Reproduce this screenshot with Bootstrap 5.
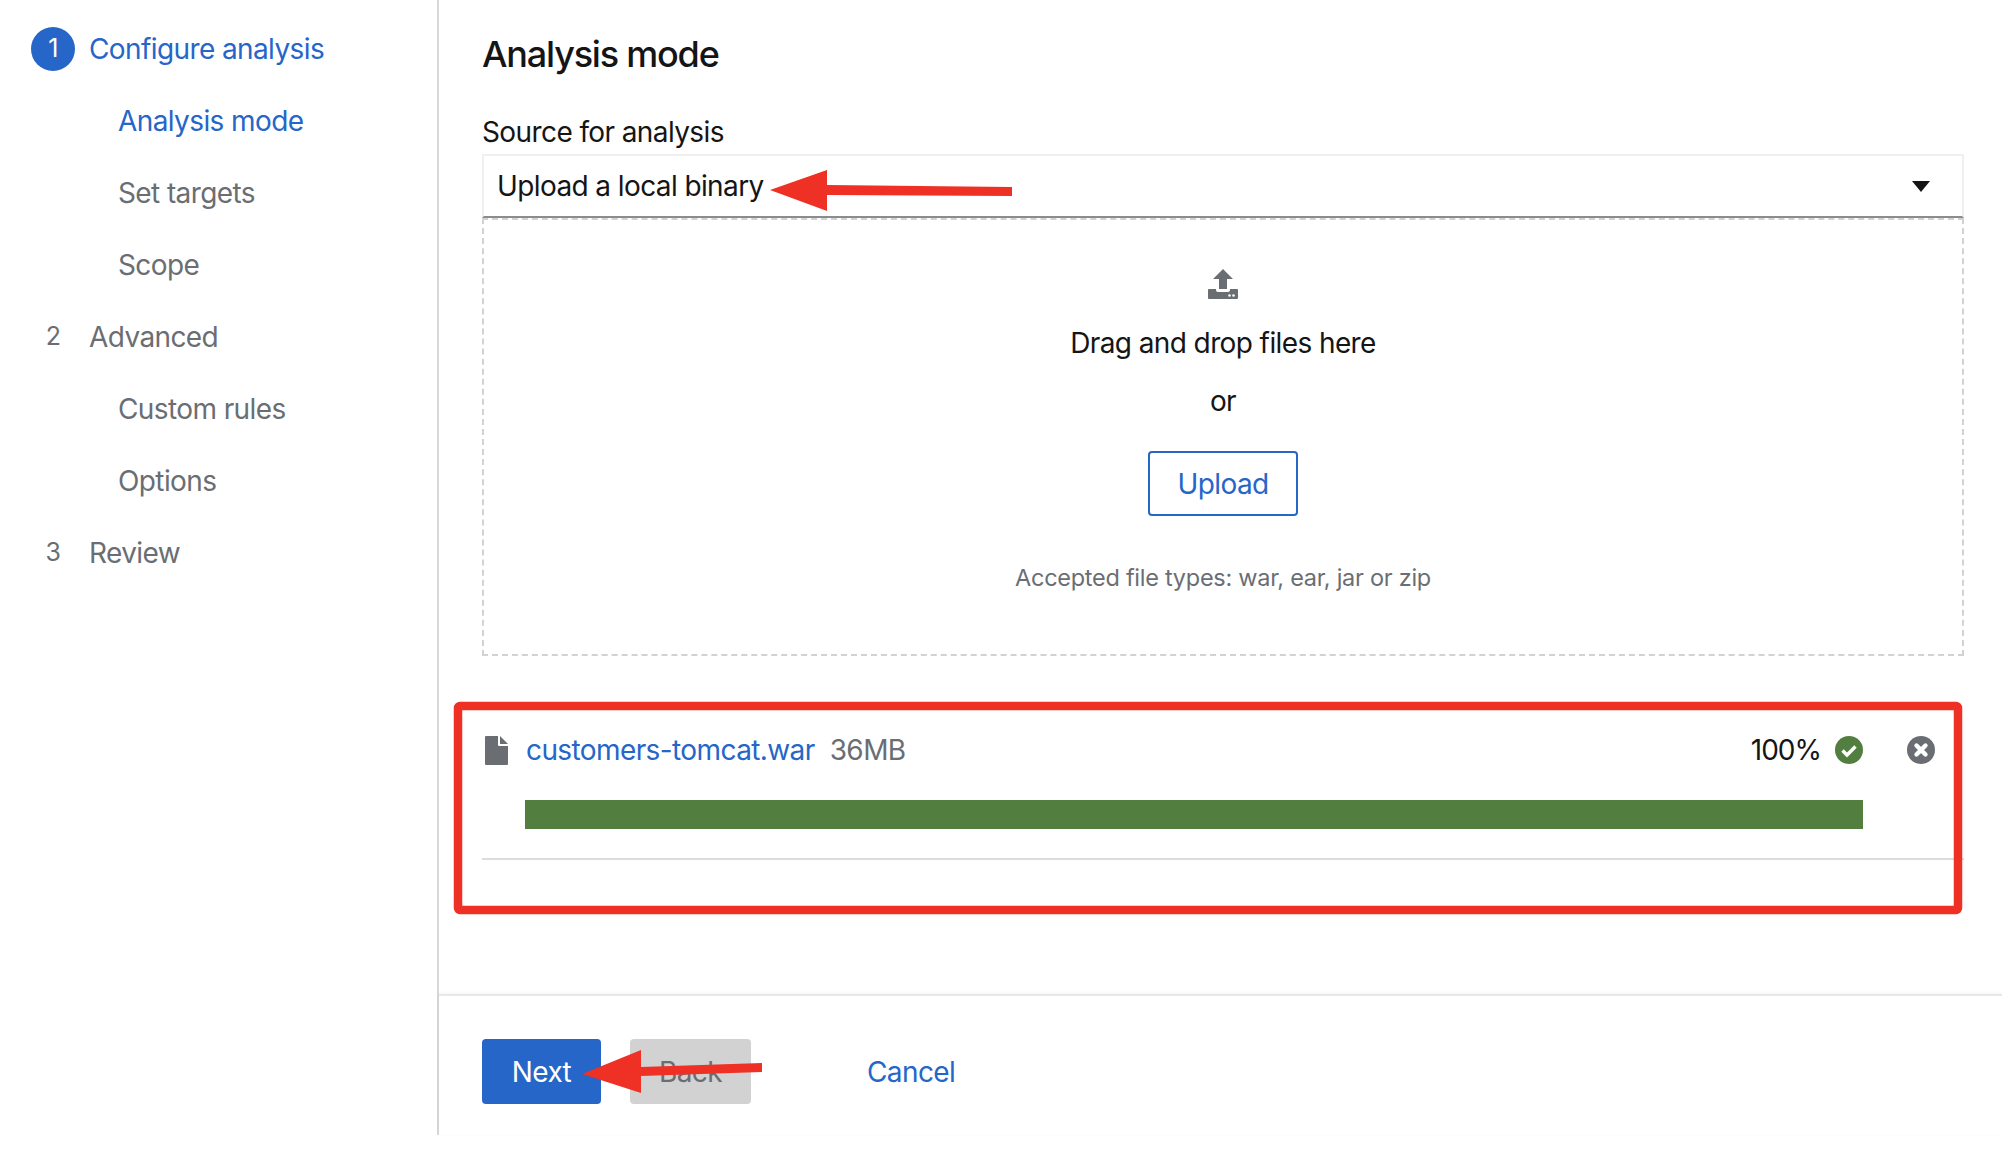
<!DOCTYPE html>
<html lang="en">
<head>
  <meta charset="UTF-8">
  <title>Analysis mode</title>
  <link href="https://cdn.jsdelivr.net/npm/bootstrap@5.3.0/dist/css/bootstrap.min.css" rel="stylesheet">
  <style>
    body {
      margin: 0;
      background: #fff;
      color: #151515;
      font-family: Inter, "Liberation Sans", sans-serif;
      font-size: 28px;
      letter-spacing: -0.6px;
      overflow: hidden;
    }
    .page-wrap { position: relative; width: 2002px; height: 1158px; }
    .wizard { height: 1135px; }

    .side-nav { width: 439px; flex: none; border-right: 2px solid #d8d8d8; padding-top: 13px; }
    .side-item { height: 72px; display: flex; align-items: center; color: #6a6e73; text-decoration: none; }
    .side-item.active-item { color: #2566c8; }
    .step-num { width: 44px; height: 44px; margin-left: 31px; margin-right: 14px; border-radius: 50%; display: flex; align-items: center; justify-content: center; font-size: 25px; }
    .active-item .step-num { background: #2566c8; color: #fff; }
    .sub-item { padding-left: 118px; }

    .wiz-main { min-width: 0; }
    .main-body { padding: 30px 38px 0 43px; }
    .page-title { font-size: 36px; font-weight: 500; line-height: 48px; margin: 0 0 36px; letter-spacing: -1.2px; }
    .field-label { line-height: 36px; margin-bottom: 4px; }
    .source-select { height: 64px; padding: 0 32px 0 13px; border: 2px solid #f0f0f0; border-bottom-color: #8a8d90; }
    .caret-down { width: 0; height: 0; border-left: 9px solid transparent; border-right: 9px solid transparent; border-top: 11px solid #151515; }
    .drop-zone { height: 438px; border: 2px dashed #d2d2d2; padding-top: 49px; }
    .drop-line { line-height: 40px; }
    .or-line { margin-top: 18px; }
    .btn-upload { width: 150px; height: 65px; font-size: 28px; letter-spacing: -0.6px; color: #2566c8; border: 2px solid #2566c8; border-radius: 4px; margin-top: 30px; padding: 0; }
    .hint-text { line-height: 36px; margin-top: 44px; color: #6a6e73; font-size: 23.5px; letter-spacing: -0.27px; }

    .file-block { margin-top: 74px; }
    .file-row { height: 40px; }
    .file-icon { margin-left: 3px; }
    .file-link { color: #2566c8; text-decoration: none; margin-left: 18px; }
    .file-size { color: #6a6e73; margin-left: 15px; }
    .file-pct { margin-right: 14px; letter-spacing: -1px; }
    .status-icon { margin-right: 44px; }
    .close-icon { margin-right: 29px; }
    .file-bar { height: 29px; margin: 30px 101px 0 43px; border-radius: 0; background: #f0f0f0; }
    .file-bar .progress-bar { background: #527f3f; }
    .file-rule { height: 2px; margin-top: 29px; background: #dcdcdc; }

    .wiz-foot { border-top: 2px solid #e8e8e8; box-shadow: 0 -1px 3px rgba(0,0,0,.05); padding: 43px 0 0 43px; height: 141px; }
    .btn-next, .btn-back, .btn-cancel { height: 65px; font-size: 28px; letter-spacing: -0.6px; padding: 0; border: 0; }
    .btn-next, .btn-back { border-radius: 4px; }
    .btn-next { width: 119px; background: #2566c8; color: #fff; }
    .btn-back, .btn-back:disabled { width: 121px; background: #d2d2d2; color: #6a6e73; margin-left: 29px; opacity: 1; }
    .btn-cancel { color: #2566c8; margin-left: 116px; }

    .annotations { position: absolute; left: 0; top: 0; pointer-events: none; }
  </style>
</head>
<body>
  <div class="page-wrap">
    <div class="wizard d-flex">
      <nav class="side-nav">
        <a class="side-item active-item" href="#"><span class="step-num">1</span>Configure analysis</a>
        <a class="side-item active-item sub-item" href="#">Analysis mode</a>
        <a class="side-item sub-item" href="#">Set targets</a>
        <a class="side-item sub-item" href="#">Scope</a>
        <a class="side-item" href="#"><span class="step-num">2</span>Advanced</a>
        <a class="side-item sub-item" href="#">Custom rules</a>
        <a class="side-item sub-item" href="#">Options</a>
        <a class="side-item" href="#"><span class="step-num">3</span>Review</a>
      </nav>

      <div class="wiz-main flex-grow-1 d-flex flex-column">
        <div class="main-body flex-grow-1">
          <h1 class="page-title">Analysis mode</h1>
          <div class="field-label">Source for analysis</div>
          <div class="source-select d-flex align-items-center justify-content-between">
            <span>Upload a local binary</span>
            <span class="caret-down"></span>
          </div>
          <div class="drop-zone text-center">
            <svg class="d-block mx-auto" width="30" height="30" viewBox="0 0 30 30">
              <path fill="#6a6e73" d="M15 0 25 10H19V20H11V10H5Z"/>
              <path fill="#6a6e73" d="M1 20H8V21Q8 23 11 23H19Q22 23 22 21V20H29Q30 20 30 21V29Q30 30 29 30H1Q0 30 0 29V21Q0 20 1 20Z"/>
              <circle cx="21.5" cy="26.5" r="1.3" fill="#fff"/><circle cx="25.5" cy="26.5" r="1.3" fill="#fff"/>
            </svg>
            <div class="drop-line mt-4">Drag and drop files here</div>
            <div class="drop-line or-line">or</div>
            <button class="btn btn-upload" type="button">Upload</button>
            <div class="hint-text">Accepted file types: war, ear, jar or zip</div>
          </div>

          <div class="file-block">
            <div class="file-row d-flex align-items-center">
              <svg class="file-icon" width="23" height="29" viewBox="0 0 23 29"><path fill="#6a6e73" d="M1 0H13V9Q13 10 14 10H23V28Q23 29 22 29H1Q0 29 0 28V1Q0 0 1 0Z"/><path fill="#6a6e73" d="M15 0 23 8H15Z"/></svg>
              <a class="file-link" href="#">customers-tomcat.war</a>
              <span class="file-size">36MB</span>
              <span class="file-pct ms-auto">100%</span>
              <svg class="status-icon" width="28" height="28" viewBox="0 0 28 28"><circle cx="14" cy="14" r="14" fill="#527f3f"/><path d="M7.5 14.5 12 19 20.5 10.5" fill="none" stroke="#fff" stroke-width="3.4"/></svg>
              <svg class="close-icon" width="28" height="28" viewBox="0 0 28 28"><circle cx="14" cy="14" r="14" fill="#6a6e73"/><path d="M9.5 9.5 18.5 18.5M18.5 9.5 9.5 18.5" fill="none" stroke="#fff" stroke-width="4.4" stroke-linecap="round"/></svg>
            </div>
            <div class="progress file-bar"><div class="progress-bar" style="width:100%"></div></div>
            <div class="file-rule"></div>
          </div>
        </div>

        <div class="wiz-foot d-flex align-items-start">
          <button class="btn btn-next" type="button">Next</button>
          <button class="btn btn-back" type="button" disabled>Back</button>
          <button class="btn btn-link btn-cancel text-decoration-none" type="button">Cancel</button>
        </div>
      </div>
    </div>

    <svg class="annotations" width="2002" height="1158" viewBox="0 0 2002 1158">
      <rect x="458" y="706" width="1500" height="204" rx="2" fill="none" stroke="#ee3124" stroke-width="8.5"/>
      <path fill="#ee3124" d="M770 190 827 170V185L1012 187V196L827 195V211Z"/>
      <path fill="#ee3124" d="M582 1074 641 1050V1067L762 1063V1072L641 1076V1093Z"/>
    </svg>
  </div>
</body>
</html>
